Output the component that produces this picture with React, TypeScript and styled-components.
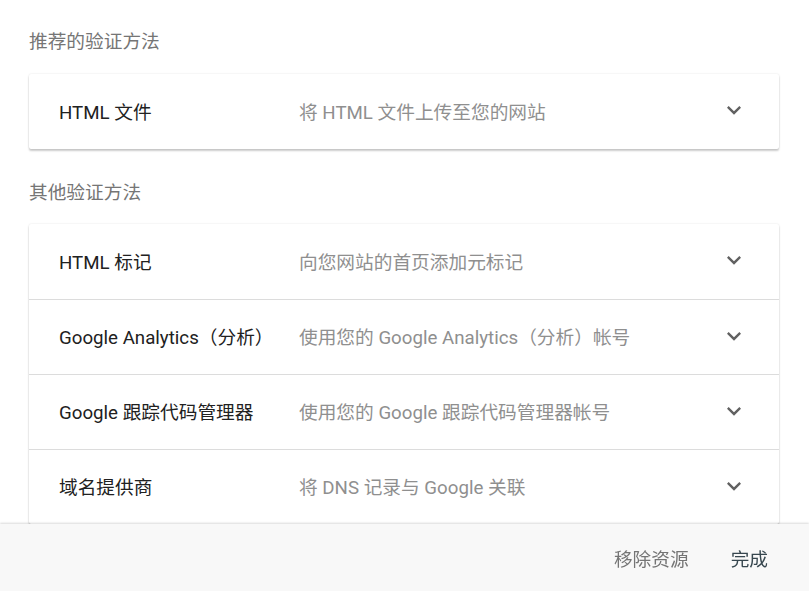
import styled, { createGlobalStyle } from 'styled-components';

type Method = {
  name: string;
  desc: string;
};

const recommended: Method[] = [
  { name: 'HTML 文件', desc: '将 HTML 文件上传至您的网站' },
];

const others: Method[] = [
  { name: 'HTML 标记', desc: '向您网站的首页添加元标记' },
  {
    name: 'Google Analytics（分析）',
    desc: '使用您的 Google Analytics（分析）帐号',
  },
  { name: 'Google 跟踪代码管理器', desc: '使用您的 Google 跟踪代码管理器帐号' },
  { name: '域名提供商', desc: '将 DNS 记录与 Google 关联' },
];

const GlobalStyle = createGlobalStyle`
  html, body {
    margin: 0;
    padding: 0;
    background: #fff;
  }
  body {
    font-family: Roboto, "Noto Sans CJK SC", sans-serif;
    -webkit-font-smoothing: antialiased;
  }
`;

const Chevron = () => (
  <svg width="24" height="24" viewBox="0 0 24 24" fill="#616161">
    <path d="M16.59 8.59L12 13.17 7.41 8.59 6 10l6 6 6-6z" />
  </svg>
);

const MethodRow = ({ method }: { method: Method }) => (
  <Row>
    <RowName children={method.name} />
    <RowDesc children={method.desc} />
    <RowIcon>
      <Chevron />
    </RowIcon>
  </Row>
);

export default function App() {
  return (
    <>
      <GlobalStyle />
      <Page>
        <SectionTitle children="推荐的验证方法" />
        <Card>
          {recommended.map((m) => (
            <MethodRow key={m.name} method={m} />
          ))}
        </Card>
        <SectionTitle children="其他验证方法" />
        <Card>
          {others.map((m) => (
            <MethodRow key={m.name} method={m} />
          ))}
        </Card>
      </Page>
      <Footer>
        <FooterButton children="移除资源" />
        <FooterButton $primary children="完成" />
      </Footer>
    </>
  );
}

const Page = styled.main`
  box-sizing: border-box;
  width: 809px;
  padding: 24px 30px 40px 29px;
  display: flex;
  flex-direction: column;
`;

const SectionTitle = styled.h2`
  margin: 0;
  height: 36px;
  line-height: 36px;
  font-size: 18.7px;
  font-weight: 400;
  color: #757575;
  margin-bottom: 14px;

  & + div + & {
    margin-top: 26px;
    margin-bottom: 13px;
  }
`;

const Card = styled.div`
  background: #fff;
  border-radius: 2px;
  box-shadow: 0 2px 2px rgba(0, 0, 0, 0.2), 0 0 2px rgba(0, 0, 0, 0.12);
`;

const Row = styled.div`
  box-sizing: border-box;
  display: flex;
  align-items: center;
  height: 75px;
  padding: 0 30px 3px 30px;
  border-top: 1px solid #dcdcdc;

  &:first-child {
    border-top: none;
  }
`;

const RowName = styled.div`
  width: 240px;
  flex-shrink: 0;
  font-size: 18.7px;
  color: #212121;
  white-space: nowrap;
`;

const RowDesc = styled.div`
  flex: 1;
  font-size: 18.7px;
  color: #8f8f8f;
  white-space: nowrap;
`;

const RowIcon = styled.div`
  display: flex;
  align-items: center;
  justify-content: center;
  width: 30px;
  height: 30px;

  svg {
    width: 28px;
    height: 28px;
  }
`;

const Footer = styled.footer`
  position: fixed;
  left: 0;
  right: 0;
  bottom: 0;
  height: 67px;
  background: #f8f8f8;
  box-shadow: 0 -1px 2px rgba(0, 0, 0, 0.15);
  display: flex;
  align-items: center;
  justify-content: flex-end;
  gap: 42px;
  padding-right: 41px;
`;

const FooterButton = styled.button<{ $primary?: boolean }>`
  border: none;
  background: none;
  padding: 0;
  font-family: inherit;
  font-size: 18.7px;
  color: ${({ $primary }) => ($primary ? '#37474f' : '#757575')};
  cursor: pointer;
`;
